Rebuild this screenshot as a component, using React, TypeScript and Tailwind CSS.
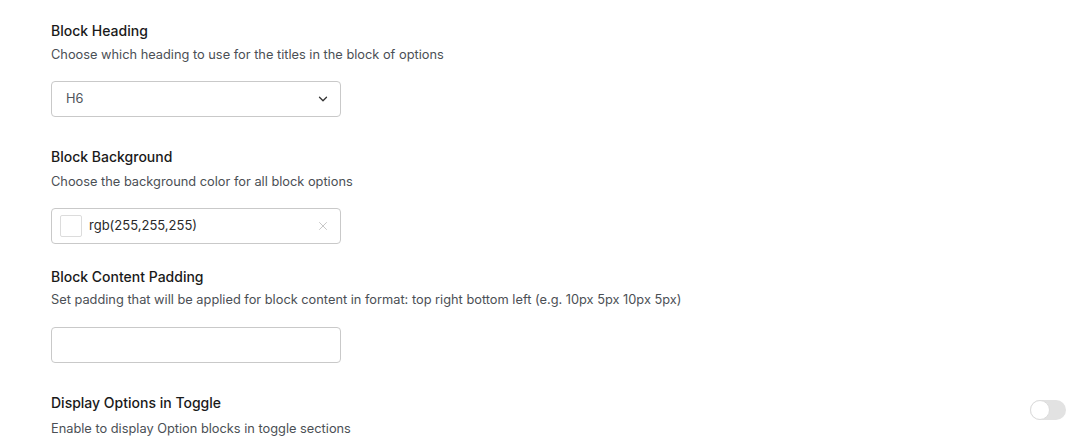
import { ChevronDown, X } from "lucide-react";

const font = { fontFamily: "Inter, 'Noto Sans', sans-serif" };

function Field({
  title,
  desc,
  children,
  mt,
  descMt,
}: {
  title: string;
  desc: string;
  children?: React.ReactNode;
  mt: string;
  descMt: string;
}) {
  return (
    <div className={mt}>
      <h3 className="text-[14px] leading-[20px] font-medium text-[#1a1a1a]">{title}</h3>
      <p className={`${descMt} text-[12.8px] leading-[18px] text-[#4b4f55]`}>{desc}</p>
      {children}
    </div>
  );
}

export default function App() {
  return (
    <div className="w-[1087px] h-[445px] overflow-hidden bg-white pl-[51px] pr-[21px] pt-[21px]" style={font}>
      <Field
        title="Block Heading"
        desc="Choose which heading to use for the titles in the block of options"
        mt=""
        descMt="mt-[5px]"
      >
        <div className="mt-[17px] w-[290px] h-[36px] flex items-center justify-between border border-[#c9c9c9] rounded-[4px] pl-[14px] pr-[10px]">
          <span className="text-[12.8px] text-[#50545a]">H6</span>
          <ChevronDown size={14} strokeWidth={2.2} className="text-[#333]" />
        </div>
      </Field>
      <Field
        title="Block Background"
        desc="Choose the background color for all block options"
        mt="mt-[30px]"
        descMt="mt-[6px]"
      >
        <div className="mt-[17px] w-[290px] h-[36px] flex items-center border border-[#c9c9c9] rounded-[4px] pl-[8px] pr-[10px]">
          <span className="w-[22px] h-[22px] border border-[#dcdcdc] rounded-[2px] bg-white" />
          <span className="ml-[7px] text-[13px] text-[#2a2a2a] flex-1">rgb(255,255,255)</span>
          <X size={14} strokeWidth={1.3} className="text-[#b5b5b5]" />
        </div>
      </Field>
      <Field
        title="Block Content Padding"
        desc="Set padding that will be applied for block content in format: top right bottom left (e.g. 10px 5px 10px 5px)"
        mt="mt-[23px]"
        descMt="mt-[4px]"
      >
        <div className="mt-[18px] w-[290px] h-[36px] border border-[#c9c9c9] rounded-[4px]" />
      </Field>
      <div className="mt-[30px] flex items-start justify-between">
        <div>
          <h3 className="text-[14px] leading-[20px] font-medium text-[#1a1a1a]">Display Options in Toggle</h3>
          <p className="mt-[7px] text-[12.8px] leading-[18px] text-[#4b4f55]">Enable to display Option blocks in toggle sections</p>
        </div>
        <div className="mt-[7px] w-[36px] h-[20px] rounded-full bg-[#e2e2e2] flex items-center">
          <span className="w-[20px] h-[20px] rounded-full bg-white border border-[#dcdcdc]" />
        </div>
      </div>
    </div>
  );
}
